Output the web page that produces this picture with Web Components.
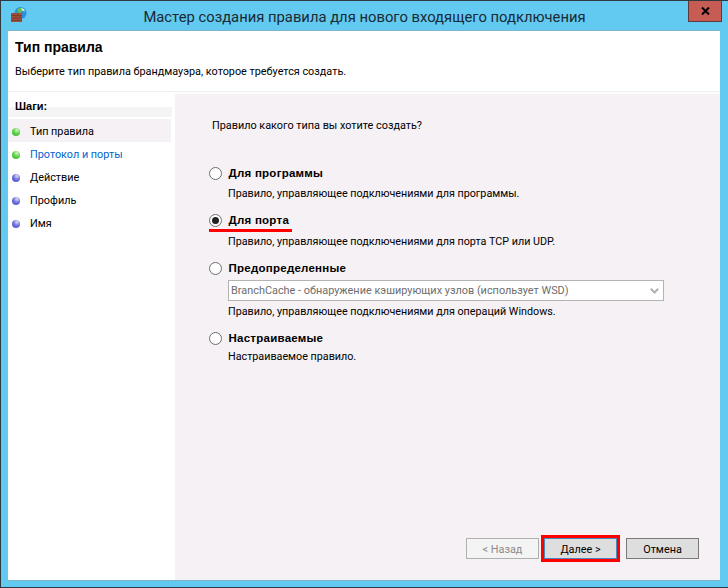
<!DOCTYPE html>
<html lang="ru">
<head>
<meta charset="utf-8">
<title>Мастер</title>
<style>
  html, body { margin: 0; padding: 0; background: #62c9f0; }
  body { width: 728px; height: 588px; overflow: hidden; font: 10.85px Roboto, sans-serif; color: #000; }
</style>
</head>
<body>
<wizard-window>
  <title-bar slot="title">Мастер создания правила для нового входящего подключения</title-bar>
  <wizard-header slot="header" heading="Тип правила">Выберите тип правила брандмауэра, которое требуется создать.</wizard-header>
  <step-list slot="steps" heading="Шаги:">
    <step-item state="done" current>Тип правила</step-item>
    <step-item state="done" link>Протокол и порты</step-item>
    <step-item>Действие</step-item>
    <step-item>Профиль</step-item>
    <step-item>Имя</step-item>
  </step-list>
  <rule-page slot="page">
    <span slot="question">Правило какого типа вы хотите создать?</span>
    <rule-option label="Для программы">Правило, управляющее подключениями для программы.</rule-option>
    <rule-option label="Для порта" checked marked style="--desc-gap: 8px">Правило, управляющее подключениями для порта TCP или UDP.</rule-option>
    <rule-option label="Предопределенные" style="--desc-gap: 4px">
      <combo-box slot="extra">BranchCache - обнаружение кэширующих узлов (использует WSD)</combo-box>
      Правило, управляющее подключениями для операций Windows.
    </rule-option>
    <rule-option label="Настраиваемые" style="--desc-gap: 5px">Настраиваемое правило.</rule-option>
    <wizard-button slot="buttons" disabled>&lt; Назад</wizard-button>
    <wizard-button slot="buttons" primary>Далее &gt;</wizard-button>
    <wizard-button slot="buttons" cancel>Отмена</wizard-button>
  </rule-page>
</wizard-window>

<script>
/* web component helper, every element gets an open shadow root */
function defineEl(name, html, extra) {
  const tpl = document.createElement('template');
  tpl.innerHTML = html;
  class El extends HTMLElement {
    constructor() {
      super();
      this.attachShadow({ mode: 'open' }).append(tpl.content.cloneNode(true));
    }
    connectedCallback() {
      if (extra) extra(this, this.shadowRoot);
    }
  }
  customElements.define(name, El);
}

defineEl('wizard-window', `
<style>
  :host { display: flex; flex-direction: column; width: 728px; height: 588px; box-sizing: border-box;
          background: #62c9f0; border-top: 1px solid #2f3a40; border-bottom: 1px solid #2f3a40; border-left: 1px solid #2f3a40; }
  .client { flex: 1; display: flex; flex-direction: column; margin: 0 8px 6px 7px; background: #fff;
            border-top: 1px solid #7fb4cf; border-bottom: 1px solid #7fb4cf; min-height: 0; }
  .body { flex: 1; display: flex; min-height: 0; padding-top: 2px; }
  .steps { width: 164px; flex: none; border-right: 3px solid #fff; }
</style>
<slot name="title"></slot>
<div class="client">
  <slot name="header"></slot>
  <div class="body">
    <div class="steps"><slot name="steps"></slot></div>
    <slot name="page"></slot>
  </div>
</div>`);

defineEl('title-bar', `
<style>
  :host { display: flex; align-items: center; justify-content: center; height: 29px; flex: none; position: relative;
          font: 14.8px Roboto, sans-serif; color: #1a2a33; }
  svg.logo { position: absolute; left: 9px; top: 5px; }
  .text { position: relative; top: 1px; }
  .close { position: absolute; right: 6px; top: 0; width: 34px; height: 21px; box-sizing: border-box; background: #c75c55;
           border: 1px solid #5a3a3a; border-top: 0; display: flex; align-items: center; justify-content: center; }
</style>
<svg class="logo" width="18" height="17" viewBox="0 0 18 17">
  <circle cx="10.500" cy="7" r="6" fill="#2f8fd8"/>
  <path d="M7 3.500c2-2 5-2 6.500 0-1 2.500-3 4-5 3.500z" fill="#5fc24a"/>
  <path d="M11 2c1.500 0 3 1 4 3-1 .5-3 0-4-3z" fill="#dff2ff"/>
  <rect x="1" y="7" width="11" height="9" fill="#a5503c"/>
  <path d="M1 9.500h11M1 12h11M1 14.500h11M4 7v2.500M8 7v2.500M6 9.500V12M10 9.500V12M4 12v2.500M8 12v2.500" stroke="#7a3a2c" stroke-width=".8" fill="none"/>
</svg>
<span class="text"><slot></slot></span>
<div class="close">
  <svg width="9" height="8" viewBox="0 0 9 8"><path d="M1 .5l7 7M8 .5l-7 7" stroke="#000" stroke-width="2" fill="none"/></svg>
</div>`);

defineEl('wizard-header', `
<style>
  :host { display: block; height: 61px; flex: none; box-sizing: border-box; padding: 8px 0 0 6px; border-bottom: 1px solid #f0f0f0; }
  h1 { margin: 0 0 0 1px; font: bold 14px/16px "Liberation Sans", sans-serif; }
  p { margin: 10px 0 0 1px; line-height: 14px; }
</style>
<h1></h1>
<p><slot></slot></p>`, (el, root) => {
  root.querySelector('h1').textContent = el.getAttribute('heading');
});

defineEl('step-list', `
<style>
  :host { display: block; }
  .title { height: 23px; box-sizing: border-box; padding: 5px 0 0 7px; font: bold 11px/14px "Liberation Sans", sans-serif;
           background: linear-gradient(#fff 0, #fff 13px, #f4f4f4 13px, #f4f4f4 100%); margin-bottom: 2px; }
</style>
<div class="title"></div>
<slot></slot>`, (el, root) => {
  root.querySelector('.title').textContent = el.getAttribute('heading');
});

defineEl('step-item', `
<style>
  :host { display: flex; align-items: center; gap: 10px; height: 23px; box-sizing: border-box; padding: 2px 0 0 4px; margin-right: 1px; }
  :host([current]) { background: #f5f1f5; }
  :host([link]) { color: #0066cc; }
  .dot { width: 8px; height: 8px; border-radius: 50%; flex: none;
         background: radial-gradient(circle at 62% 25%, #dcdcfa 0, #6a6ad8 50%, #5555c4 100%); }
  :host([state="done"]) .dot { background: radial-gradient(circle at 62% 25%, #d8f5c8 0, #55d040 50%, #3fb52f 100%); }
</style>
<span class="dot"></span>
<span><slot></slot></span>`);

defineEl('rule-page', `
<style>
  :host { flex: 1; display: flex; flex-direction: column; background: #f5f1f5; padding: 25px 0 0 34px; min-width: 0; }
  .q { line-height: 14px; margin-bottom: 33px; margin-left: 3px; }
  .options { flex: 1; display: flex; flex-direction: column; gap: 12px; }
  .buttons { display: flex; justify-content: flex-end; margin: 0 21px 21px 0; align-items: center; }
</style>
<div class="q"><slot name="question"></slot></div>
<div class="options"><slot></slot></div>
<div class="buttons"><slot name="buttons"></slot></div>`);

defineEl('rule-option', `
<style>
  :host { display: block; font-size: 10.75px; }
  .row { display: flex; align-items: center; gap: 6.5px; height: 14px; position: relative; }
  .radio { width: 13px; height: 13px; box-sizing: border-box; border-radius: 50%; background: #fff; border: 1px solid #6e6e6e; flex: none;
           display: flex; align-items: center; justify-content: center; }
  .radio i { width: 7px; height: 7px; border-radius: 50%; background: #222; display: none; }
  :host([checked]) .radio i { display: block; }
  b { font: bold 11.5px/14px "Liberation Sans", sans-serif; letter-spacing: .25px; }
  .mark { display: none; position: absolute; left: 0; top: 16px; width: 83px; height: 3px; background: #f00; }
  :host([marked]) .mark { display: block; }
  .extra { margin-left: 19px; }
  ::slotted(combo-box) { margin-top: 5px; font-size: 10.9px; }
  .desc { margin: var(--desc-gap, 7px) 0 0 19px; line-height: 14px; }
</style>
<div class="row"><span class="radio"><i></i></span><b></b><span class="mark"></span></div>
<div class="extra"><slot name="extra"></slot></div>
<div class="desc"><slot></slot></div>`, (el, root) => {
  root.querySelector('b').textContent = el.getAttribute('label');
});

defineEl('combo-box', `
<style>
  :host { display: flex; align-items: center; justify-content: space-between; width: 436px; height: 21px; box-sizing: border-box;
          background: #fff; border: 1px solid #b3b3b3; padding: 0 4px 0 2px; color: #6d6d6d; }
  span { white-space: nowrap; }
</style>
<span><slot></slot></span>
<svg width="9" height="6" viewBox="0 0 9 6"><path d="M.8 .8l3.700 3.700 3.700-3.700" stroke="#b0b0b0" stroke-width="2" fill="none"/></svg>`);

defineEl('wizard-button', `
<style>
  :host { display: flex; align-items: center; justify-content: center; width: 73px; height: 21px; box-sizing: border-box;
          background: #dedede; border: 1px solid #7a7a7a; padding-top: 1px; position: relative; }
  :host([disabled]) { background: #f4f4f4; border-color: #b0b0b0; color: #8c8c8c; margin-right: 5px; }
  :host([primary]) { border-color: #4a8ab8; outline: 3px solid #f00; }
  :host([cancel]) { margin-left: 9px; }
</style>
<slot></slot>`);
</script>
</body>
</html>
